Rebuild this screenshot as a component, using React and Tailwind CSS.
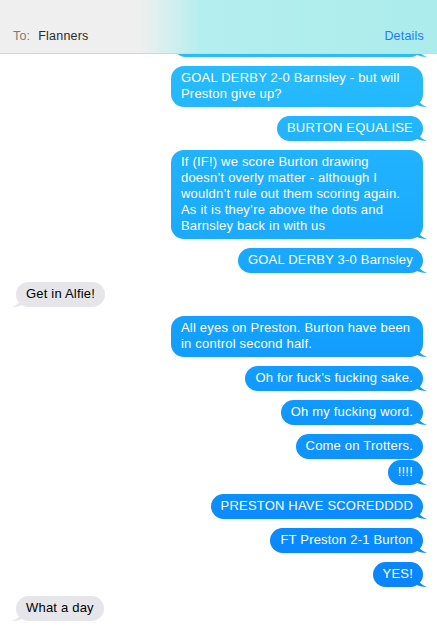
const messages = [
  { from: "me", text: "GOAL DERBY 2-0 Barnsley - but will Preston give up?", tail: true },
  { from: "me", text: "BURTON EQUALISE", tail: true },
  {
    from: "me",
    text: "If (IF!) we score Burton drawing doesn\u2019t overly matter - although I wouldn\u2019t rule out them scoring again. As it is they\u2019re above the dots and Barnsley back in with us",
    tail: true,
  },
  { from: "me", text: "GOAL DERBY 3-0 Barnsley", tail: true },
  { from: "them", text: "Get in Alfie!", tail: true },
  { from: "me", text: "All eyes on Preston. Burton have been in control second half.", tail: true },
  { from: "me", text: "Oh for fuck\u2019s fucking sake.", tail: true },
  { from: "me", text: "Oh my fucking word.", tail: true },
  { from: "me", text: "Come on Trotters.", tail: false },
  { from: "me", text: "!!!!", tail: true, tight: true },
  { from: "me", text: "PRESTON HAVE SCOREDDDD", tail: true },
  { from: "me", text: "FT Preston 2-1 Burton", tail: true },
  { from: "me", text: "YES!", tail: true },
  { from: "them", text: "What a day", tail: true },
];

const blue = "bg-fixed bg-linear-to-b from-[#2cc2fd] to-[#0a80fe]";

function BlueTail() {
  return (
    <div
      className={`absolute -right-[4px] bottom-0 h-[12px] w-[10px] ${blue} [clip-path:path('M0_0_Q1_9_10_12_Q4_12_0_10_Z')]`}
    />
  );
}

function Bubble({ msg }) {
  const mine = msg.from === "me";
  return (
    <div
      className={`flex ${mine ? "justify-end pr-[14px]" : "justify-start pl-4"} ${
        msg.tight ? "mt-px" : "mt-[9px]"
      }`}
    >
      <div className="relative max-w-[252px]">
        <div
          className={`relative z-10 rounded-[13px] px-[10px] pt-[4px] pb-[5px] text-[13px] leading-4 tracking-[0.2px] ${
            mine ? `${blue} text-white` : "bg-[#e5e5ea] text-black"
          }`}
        >
          {msg.text}
        </div>
        {msg.tail && mine && <BlueTail />}
        {msg.tail && !mine && (
          <div className="absolute -left-[4px] bottom-0 h-[12px] w-[10px] bg-[#e5e5ea] [clip-path:path('M10_0_Q9_9_0_12_Q6_12_10_10_Z')]" />
        )}
      </div>
    </div>
  );
}

export default function App() {
  return (
    <div className="relative h-[628px] w-[437px] overflow-hidden bg-white font-['Liberation_Sans',Arial,sans-serif]">
      <div className="relative z-20 flex h-[54px] items-end border-b border-[#d6d6d6] bg-linear-to-r from-[#efefef] from-[32%] via-[#b4eeee] via-[46%] to-[#acecec] px-[13px] pb-[7px] text-[12.5px] tracking-[0.2px]">
        <span className="text-[#7b7b7b]">To:</span>
        <span className="ml-[8px] text-[#2a2a2a]">Flanners</span>
        <span className="ml-auto text-[#1a7ef5]">Details</span>
      </div>
      <div className="-mt-[22px]">
        {/* earlier message, scrolled up under the header */}
        <div className="flex justify-end pr-[14px]">
          <div className="relative">
            <div className={`relative z-10 h-[25px] w-[250px] rounded-[13px] ${blue}`} />
            <BlueTail />
          </div>
        </div>
        {messages.map((m, i) => (
          <Bubble key={i} msg={m} />
        ))}
      </div>
    </div>
  );
}
